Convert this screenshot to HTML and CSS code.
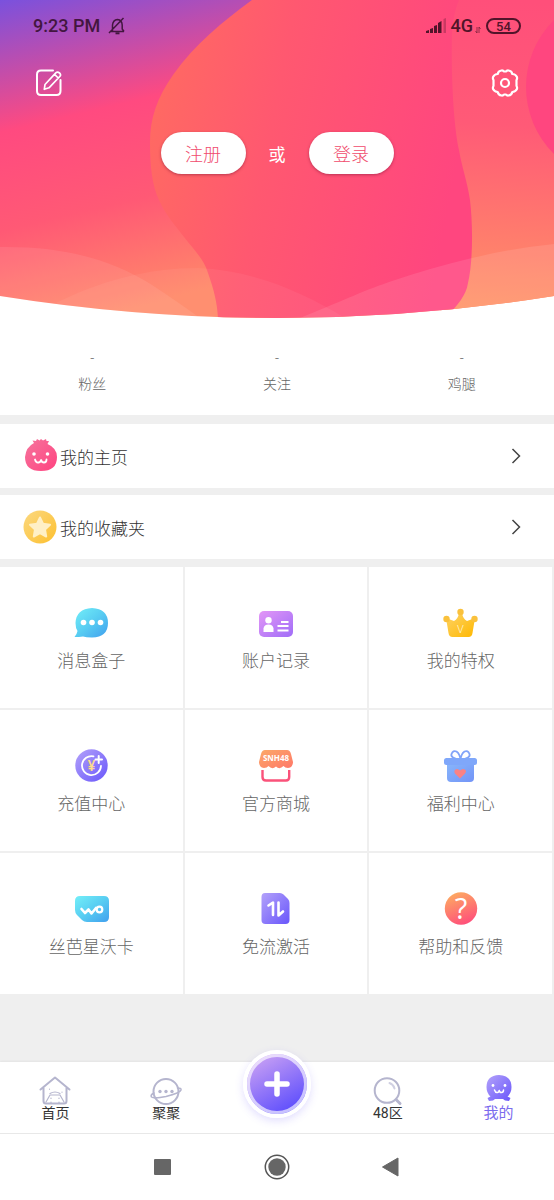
FILE: index.html
```html
<!DOCTYPE html>
<html lang="zh-CN">
<head>
    <meta charset="UTF-8">
    <meta name="viewport" content="width=device-width, initial-scale=1.0">
    <title>我的</title>
    <link rel="stylesheet" href="styles.css">
</head>
<body>
    <header class="hero">
        <svg class="hero-art" viewBox="0 0 554 318" preserveAspectRatio="none" aria-hidden="true">
            <defs>
                <linearGradient id="sky" gradientUnits="userSpaceOnUse" x1="0" y1="0" x2="76" y2="322">
                    <stop offset="0" stop-color="#7a51dd"/>
                    <stop offset=".39" stop-color="#ff4a80"/>
                    <stop offset=".68" stop-color="#ff5975"/>
                    <stop offset="1" stop-color="#ff8a69"/>
                </linearGradient>
                <linearGradient id="blob" gradientUnits="userSpaceOnUse" x1="150" y1="90" x2="460" y2="150">
                    <stop offset="0" stop-color="#ff6a62"/>
                    <stop offset=".4" stop-color="#ff5870"/>
                    <stop offset="1" stop-color="#ff467f"/>
                </linearGradient>
                <linearGradient id="side" gradientUnits="userSpaceOnUse" x1="500" y1="0" x2="480" y2="310">
                    <stop offset="0" stop-color="#ff4f7a"/>
                    <stop offset=".4" stop-color="#ff5a77"/>
                    <stop offset="1" stop-color="#ff9366"/>
                </linearGradient>
                <clipPath id="arc"><path d="M0 0H554V296Q277 340 0 296Z"/></clipPath>
            </defs>
            <g clip-path="url(#arc)">
                <rect width="554" height="318" fill="url(#sky)"/>
                <path d="M440 0H554V318H440Z" fill="url(#side)"/>
                <circle cx="620" cy="87" r="94" fill="#ff467f"/>
                <path d="M252 0C222 22 195 44 173 75C157 98 150 118 150 143C150 166 152 185 159 200C166 216 176 226 184 237C196 252 204 260 208 273C214 290 217 302 218 318H446C458 304 466 296 468 283C473 262 473 225 470 200C467 180 462 168 459 150C453 122 451 70 452 33Q453 14 459 0Z" fill="url(#blob)"/>
                <g fill="#fff">
                    <path d="M0 247C70 246 115 262 152 285Q175 300 200 318H0Z" fill-opacity=".08"/>
                    <path d="M50 306C100 280 150 268 198 268C250 270 300 290 345 318H50Z" fill-opacity=".05"/>
                    <path d="M300 318C340 302 360 292 389 282Q430 268 472 258T554 244V318Z" fill-opacity=".1"/>
                </g>
            </g>
        </svg>

        <div class="status">
            <span class="time">9:23 PM</span>
            <svg class="bell" width="18" height="18" viewBox="0 0 18 18" fill="none" stroke="#43163f" stroke-width="1.5">
                <path d="M3 14.5H16M4.500 14V8Q5 3 9.500 2.500Q14 3 14.200 8V12L16 14.500M1 16L15.500 1"/>
                <path d="M7.500 16.300H11.500" stroke-width="2"/>
            </svg>
            <svg class="signal" width="20" height="15" viewBox="0 0 20 15" fill="#51142a">
                <path d="M0 13L3 12V15H0ZM4 11L7 10V15H4ZM8 8L11 7V15H8ZM12 5L15.500 3V15H12Z"/>
                <path d="M17.500 1L20 0V15H17.500Z" opacity=".3"/>
            </svg>
            <span class="net">4G</span>
            <svg class="updown" width="6" height="8" viewBox="0 0 6 8" fill="none" stroke="#51142a" stroke-opacity=".6">
                <path d="M2 1V7L.5 5M4 7V1L5.500 3"/>
            </svg>
            <span class="battery">54</span>
        </div>

        <div class="tools">
            <button class="tool" aria-label="编辑">
                <svg width="28" height="28" viewBox="0 0 28 28" fill="none" stroke="#fff" stroke-width="2" stroke-linecap="round" stroke-linejoin="round">
                    <path d="M18 1.500H6Q2 1.500 2 5.500V22Q2 26 6 26H21.500Q25.500 26 25.500 22V11"/>
                    <path d="M10 15.500L20.800 3.800Q22.500 2.200 24.500 4T24.800 7.500L14 18.800L9.300 20.300ZM19.500 5.300L23.300 9" stroke-width="1.700"/>
                </svg>
            </button>
            <button class="tool" aria-label="设置">
                <svg width="28" height="28" viewBox="0 0 28 28" fill="none" stroke="#fff" stroke-width="2.200" stroke-linejoin="round">
                    <path d="M10.500 1.500Q12.300 1.300 13 2.500H15Q15.700 1.300 17.500 1.500Q20.700 1.800 21.300 5Q24.500 5.200 25.800 7.700Q26.500 9.500 25.500 11V17Q26.500 18.500 25.800 20.300Q24.500 22.800 21.300 23Q20.700 26.200 17.500 26.500Q15.700 26.700 15 25.500H13Q12.300 26.700 10.500 26.500Q7.300 26.200 6.700 23Q3.500 22.800 2.200 20.300Q1.500 18.500 2.500 17V11Q1.500 9.500 2.200 7.700Q3.500 5.200 6.700 5Q7.300 1.800 10.500 1.500Z"/>
                    <circle cx="14" cy="14" r="4"/>
                </svg>
            </button>
        </div>

        <div class="auth">
            <button class="pill">注册</button>
            <span>或</span>
            <button class="pill">登录</button>
        </div>
    </header>

    <main>
        <section class="stats">
            <div class="stat"><span>-</span><span>粉丝</span></div>
            <div class="stat"><span>-</span><span>关注</span></div>
            <div class="stat"><span>-</span><span>鸡腿</span></div>
        </section>

        <a class="row" href="#">
            <svg class="row-icon" width="40" height="40" viewBox="0 0 40 40">
                <defs>
                    <linearGradient id="pink" x1="0" y1="0" x2="1" y2="1"><stop offset="0" stop-color="#f5759d"/><stop offset="1" stop-color="#ff4380"/></linearGradient>
                </defs>
                <path d="M14 7L12.500 4.500L16 5L17 3L19.500 4.500L21 3L23 4.500L26 3L26.500 5H29L27.500 8Q37 12 37 21Q37 35 21 35Q5 35 5 21Q6 11 14 7Z" fill="url(#pink)"/>
                <circle cx="14" cy="18" r="1.800" fill="#fff"/><circle cx="27.500" cy="18" r="1.800" fill="#fff"/>
                <path d="M15 23.500Q16 27 18.500 26.500T21 23.500Q21.500 26.500 24 26.500T26.500 23.500" fill="none" stroke="#fff" stroke-width="1.800" stroke-linecap="round"/>
            </svg>
            <span>我的主页</span>
            <svg class="arrow" width="10" height="16" viewBox="0 0 10 16"><path d="M1.500 1L8.500 8L1.500 15"/></svg>
        </a>
        <a class="row" href="#">
            <svg class="row-icon" width="40" height="40" viewBox="0 0 40 40">
                <defs>
                    <linearGradient id="gold" x1="0" y1="0" x2="1" y2="1"><stop offset="0" stop-color="#fbd880"/><stop offset="1" stop-color="#fdc02f"/></linearGradient>
                </defs>
                <circle cx="20" cy="20" r="16.500" fill="url(#gold)"/>
                <path d="M20 10.500L23 16.800L30 17.800L25 22.500L26.200 29.500L20 26.200L13.800 29.500L15 22.500L10 17.800L17 16.800Z" fill="#fff0c6" stroke="#fff0c6" stroke-width="2" stroke-linejoin="round"/>
            </svg>
            <span>我的收藏夹</span>
            <svg class="arrow" width="10" height="16" viewBox="0 0 10 16"><path d="M1.500 1L8.500 8L1.500 15"/></svg>
        </a>

        <section class="grid">
            <a class="cell" href="#">
                <svg width="40" height="40" viewBox="0 0 40 40">
                    <defs><linearGradient id="cyan" x1="0" y1="0" x2="1" y2="1"><stop offset="0" stop-color="#73eff8"/><stop offset=".5" stop-color="#58cdf2"/><stop offset="1" stop-color="#419fee"/></linearGradient></defs>
                    <path d="M21 5Q37 6 37 20T21 34.500Q15 34.500 12 33.500Q8 34 3.500 34Q6 31 6.500 28Q4.500 25 4.500 20Q5 6 21 5Z" fill="url(#cyan)"/>
                    <g fill="#fff"><circle cx="12.500" cy="19.500" r="2.800"/><circle cx="21" cy="19.500" r="2.800"/><circle cx="29.500" cy="19.500" r="2.800"/></g>
                </svg>
                <span>消息盒子</span>
            </a>
            <a class="cell" href="#">
                <svg width="40" height="40" viewBox="0 0 40 40">
                    <defs><linearGradient id="violet" x1="0" y1="0" x2="1" y2="1"><stop offset="0" stop-color="#e397f6"/><stop offset="1" stop-color="#a06df8"/></linearGradient></defs>
                    <rect x="3" y="8" width="34" height="26" rx="5" fill="url(#violet)"/>
                    <g fill="#fff"><circle cx="12.500" cy="17.300" r="3.200"/><path d="M7.500 29V25.500Q8 21.500 12.500 21.500T17.500 25.500V29Z"/></g>
                    <path d="M25 19H32.500M21.500 23H32.500M21.500 27.500H32.500" stroke="#fff" stroke-width="2"/>
                </svg>
                <span>账户记录</span>
            </a>
            <a class="cell" href="#">
                <svg width="40" height="40" viewBox="0 0 40 40">
                    <defs><linearGradient id="crown" x1="0" y1="0" x2="1" y2="1"><stop offset="0" stop-color="#fdd367"/><stop offset="1" stop-color="#ffb800"/></linearGradient></defs>
                    <path d="M5 15L13 18Q17 16 18 10H21Q22 16 26 18L34 15L31.500 30Q31 34 27.500 34H11.500Q8 34 7.500 30Z" fill="url(#crown)"/>
                    <g fill="#fac13c"><circle cx="5.500" cy="16" r="3.200"/><circle cx="19.500" cy="9" r="3.200"/><circle cx="33.500" cy="16" r="3.200"/></g>
                    <text class="crown-v" x="19.500" y="30" text-anchor="middle">V</text>
                </svg>
                <span>我的特权</span>
            </a>
            <a class="cell" href="#">
                <svg width="40" height="40" viewBox="0 0 40 40">
                    <defs><linearGradient id="purple" x1="0" y1="0" x2="1" y2="1"><stop offset="0" stop-color="#b3a2fa"/><stop offset="1" stop-color="#6956fb"/></linearGradient></defs>
                    <circle cx="20.500" cy="19.500" r="16.200" fill="url(#purple)"/>
                    <path d="M22.500 10.300A9.500 9.500 0 1 0 30 19.800" fill="none" stroke="#fff" stroke-width="1.800" stroke-linecap="round"/>
                    <path d="M24.500 13.500H31M27.700 10V17" stroke="#fff" stroke-width="2" stroke-linecap="round"/>
                    <text class="yen" x="20.500" y="25" text-anchor="middle">¥</text>
                </svg>
                <span>充值中心</span>
            </a>
            <a class="cell" href="#">
                <svg width="40" height="40" viewBox="0 0 40 40">
                    <defs><linearGradient id="shop" x1="0" y1="0" x2="1" y2="1"><stop offset="0" stop-color="#fba968"/><stop offset="1" stop-color="#ff7869"/></linearGradient></defs>
                    <path d="M6.500 24V31Q6.500 34.500 10 34.500H30Q33.200 34.500 33.200 31V24" fill="none" stroke="#fa527a" stroke-width="2.400"/>
                    <path d="M9 4H31Q34 4 35 8L37 16Q37 21.500 32 22Q29 22 27.500 20Q23.500 24 20 20.500Q16 24 12.500 20Q11 22 8 22Q3 21.500 3 16L5 8Q6 4 9 4Z" fill="url(#shop)"/>
                    <text class="sign" x="20" y="15" text-anchor="middle">SNH48</text>
                </svg>
                <span>官方商城</span>
            </a>
            <a class="cell" href="#">
                <svg width="40" height="40" viewBox="0 0 40 40">
                    <defs><linearGradient id="gift" x1="0" y1="0" x2="1" y2="1"><stop offset="0" stop-color="#88b6fb"/><stop offset="1" stop-color="#7394f7"/></linearGradient></defs>
                    <path d="M19.500 14Q9 12 10.500 8Q12 4 15.500 5.500Q19 8 19.500 14ZM19.500 14Q30 12 28.500 8Q27 4 23.500 5.500Q20 8 19.500 14Z" fill="none" stroke="#81a3f8" stroke-width="1.800"/>
                    <path d="M6 17H33V32Q33 36 29 36H10Q6 36 6 32Z" fill="url(#gift)"/>
                    <rect x="3" y="12" width="33" height="7" rx="2.500" fill="#7fa7fa"/>
                    <path d="M19 32.500L14 27.500Q12.500 25 14.500 23.500T19 24.500Q21.500 22 23.800 23.500T24 27.500Z" fill="#f98284"/>
                </svg>
                <span>福利中心</span>
            </a>
            <a class="cell" href="#">
                <svg width="40" height="40" viewBox="0 0 40 40">
                    <path d="M9 7H33Q38 7 38 12V28Q38 33 33 33H16Q13 33 11 31L6 26Q4 24 4 21V12Q4 7 9 7Z" fill="url(#cyan)"/>
                    <path d="M10.500 20L14 24L17.500 20.500L20.500 24.500L25 19" fill="none" stroke="#fff" stroke-width="2.600" stroke-linecap="round" stroke-linejoin="round"/>
                    <circle cx="28.500" cy="20.500" r="2.800" fill="none" stroke="#fff" stroke-width="2.200"/>
                </svg>
                <span>丝芭星沃卡</span>
            </a>
            <a class="cell" href="#">
                <svg width="40" height="40" viewBox="0 0 40 40">
                    <path d="M9 4H24Q26 4 27.500 5.500L32 10Q33.500 11.500 33.500 14V31Q33.500 35 29.500 35H9.500Q5.500 35 5.500 31V8Q5.500 4 9 4Z" fill="url(#purple)"/>
                    <path d="M12.500 16.500L17 13.500V26M22.500 13.500V26.500L27 22.500" fill="none" stroke="#fff" stroke-width="2.600" stroke-linecap="round" stroke-linejoin="round"/>
                </svg>
                <span>免流激活</span>
            </a>
            <a class="cell" href="#">
                <svg width="40" height="40" viewBox="0 0 40 40">
                    <defs><linearGradient id="help" x1=".3" y1="0" x2=".7" y2="1"><stop offset="0" stop-color="#fdaa62"/><stop offset="1" stop-color="#ff4c7b"/></linearGradient></defs>
                    <circle cx="20" cy="19.500" r="16.200" fill="url(#help)"/>
                    <text class="question" x="20" y="30" text-anchor="middle">?</text>
                </svg>
                <span>帮助和反馈</span>
            </a>
        </section>
    </main>

    <nav class="tabs">
        <a class="tab" href="#">
            <svg width="34" height="32" viewBox="0 0 34 32" fill="none" stroke="#b5b5ce" stroke-width="2" stroke-linejoin="round" stroke-linecap="round">
                <path d="M2.500 15.500L17 3.500L31.500 15.500M5.500 14V27Q5.500 29.500 8 29.500H26Q28.500 29.500 28.500 27V14"/>
                <path d="M8 28L12 21H22L26 28M12 19.500Q17 16.500 22 19.500M11.500 15V15.200M24 18V18.200M13 24V24.500M21 24V24.500M13 28V28.500M21 28V28.500" stroke-width="1.200"/>
            </svg>
            <span>首页</span>
        </a>
        <a class="tab" href="#">
            <svg width="34" height="32" viewBox="0 0 34 32" fill="none" stroke="#b5b5ce" stroke-width="2" stroke-linecap="round">
                <circle cx="17" cy="17.500" r="12.500"/>
                <path d="M5 19Q1 21 2.500 23Q5 25 17 22.500Q31 19 32 16Q32.500 14 28.500 14" stroke-width="1.600"/>
                <g fill="#b5b5ce" stroke="none"><circle cx="11" cy="17.500" r="1.700"/><circle cx="17" cy="17.500" r="1.700"/><circle cx="23" cy="17.500" r="1.700"/></g>
            </svg>
            <span>聚聚</span>
        </a>
        <button class="publish" aria-label="发布">
            <svg width="28" height="28" viewBox="0 0 28 28"><path d="M14 4V24M4 14H24" stroke="#fff" stroke-width="5.500" stroke-linecap="round"/></svg>
        </button>
        <a class="tab" href="#">
            <svg width="34" height="32" viewBox="0 0 34 32" fill="none" stroke="#b5b5ce" stroke-width="2" stroke-linecap="round">
                <circle cx="16" cy="16.500" r="12.300"/>
                <path d="M25.500 26L29 29.500" stroke-width="3"/>
                <path d="M18.500 9Q22.500 10.500 23.500 14.500" stroke="#d0d0e2"/>
            </svg>
            <span>48区</span>
        </a>
        <a class="tab active" href="#">
            <svg width="34" height="32" viewBox="0 0 34 32">
                <path d="M17 1Q29.500 1.500 29.500 13Q29.500 19 25.500 22.500L28.500 24L27 27L23 26.500L21 25H13L11 26.500L7 27L5.500 24L8.500 22.500Q4.500 19 4.500 13Q4.500 1.500 17 1Z" fill="url(#purple)"/>
                <circle cx="11" cy="11.500" r="1.400" fill="#fff"/><circle cx="23" cy="11.500" r="1.400" fill="#fff"/>
                <path d="M12.500 16Q13.500 19 15.500 18.500T17 16Q17.500 18.500 19.500 18.500T21.500 16" fill="none" stroke="#fff" stroke-width="1.500" stroke-linecap="round"/>
            </svg>
            <span>我的</span>
        </a>
    </nav>

    <footer class="system">
        <button aria-label="最近任务"><svg width="26" height="26" viewBox="0 0 26 26"><rect x="4" y="5" width="17" height="16" rx="1" fill="#666"/></svg></button>
        <button aria-label="主屏幕"><svg width="26" height="26" viewBox="0 0 26 26"><circle cx="13" cy="13" r="11.700" fill="none" stroke="#555" stroke-width="1.500"/><circle cx="13" cy="13" r="8.700" fill="#666"/></svg></button>
        <button aria-label="返回"><svg width="26" height="26" viewBox="0 0 26 26"><path d="M4.500 13L20 4V22Z" fill="#666" stroke="#666" stroke-linejoin="round"/></svg></button>
    </footer>
</body>
</html>
```
FILE: styles.css
```css
:root {
    --purple: #7b6bee;
    --gray-bg: #efefef;
    --text: #333;
    --text-light: #666;
}

* {
    box-sizing: border-box;
}

body {
    margin: 0;
    min-height: 100vh;
    display: flex;
    flex-direction: column;
    background: var(--gray-bg);
    color: var(--text);
    font-family: Roboto, "Noto Sans CJK SC", sans-serif;
    font-weight: 300;
}

a {
    color: inherit;
    text-decoration: none;
}

button {
    border: 0;
    padding: 0;
    background: none;
    font: inherit;
}

svg {
    display: block;
    flex-shrink: 0;
}

.hero {
    position: relative;
    height: 318px;
    background: white;
}

.hero-art {
    position: absolute;
    width: 100%;
    height: 100%;
}

.status,
.tools,
.auth {
    position: relative;
    display: flex;
    align-items: center;
}

.status {
    height: 51px;
    padding: 0 33px;
    color: #43163f;
    font-size: 18px;
    font-weight: 500;
}

.bell {
    margin-left: 8px;
}

.signal {
    margin-left: auto;
}

.net {
    margin-left: 5px;
    color: #51142a;
}

.updown {
    margin: 8px 5px 0 2px;
}

.battery {
    width: 35px;
    height: 16px;
    border: 2px solid #51142a;
    border-radius: 8px;
    color: #51142a;
    font-size: 13px;
    line-height: 13px;
    text-align: center;
}

.tools {
    justify-content: space-between;
    height: 63px;
    padding: 0 35px;
}

.auth {
    justify-content: center;
    gap: 23px;
    margin-top: 18px;
    color: white;
    font-size: 17px;
    font-weight: 400;
}

.pill {
    width: 85px;
    height: 42px;
    border-radius: 21px;
    background: white;
    color: #f04b6c;
    font-size: 18px;
    font-weight: 300;
    box-shadow: 0 1px 3px rgba(120,20,50,0.5);
}

.stats {
    display: grid;
    grid-template-columns: repeat(3, 1fr);
    padding: 27px 0 18px;
    background: white;
}

.stat {
    display: flex;
    flex-direction: column;
    align-items: center;
    color: var(--text-light);
    font-size: 14px;
    line-height: 26px;
}

.row {
    display: flex;
    align-items: center;
    height: 64px;
    margin-top: 7px;
    padding: 0 33px 0 20px;
    background: white;
    font-size: 17px;
}

.stats + .row {
    margin-top: 9px;
}

.arrow {
    margin-left: auto;
    fill: none;
    stroke: #444;
    stroke-width: 1.5;
}

.grid {
    display: grid;
    grid-template-columns: repeat(3, 1fr);
    gap: 2px;
    margin-top: 8px;
    padding-right: 2px;
}

.cell {
    display: flex;
    flex-direction: column;
    align-items: center;
    gap: 6px;
    height: 141px;
    padding-top: 36px;
    background: white;
    color: var(--text-light);
    font-size: 17px;
    line-height: 24px;
}

.crown-v {
    fill: #fff5d3;
    font-size: 11px;
}

.yen {
    fill: #fbdc8c;
    font-size: 14px;
    font-weight: 500;
}

.sign {
    fill: white;
    font-family: "Open Sans", sans-serif;
    font-size: 8px;
    font-weight: 700;
}

.question {
    fill: white;
    font-family: "Open Sans", sans-serif;
    font-size: 29px;
    font-weight: 500;
}

.tabs {
    display: grid;
    grid-template-columns: repeat(5, 1fr);
    height: 71px;
    margin-top: auto;
    background: white;
    box-shadow: 0 -1px 2px rgba(0,0,0,0.05);
}

.tab {
    display: flex;
    flex-direction: column;
    align-items: center;
    padding-top: 12px;
    font-size: 14px;
    font-weight: 400;
    line-height: 15px;
}

.active {
    color: var(--purple);
    font-size: 15px;
}

.publish {
    display: grid;
    place-items: center;
    justify-self: center;
    width: 68px;
    height: 68px;
    margin-top: -12px;
    border: 4px solid white;
    border-radius: 50%;
    background: linear-gradient(150deg, #c8a0f4 10%, #5a4bfd 90%);
    box-shadow: inset 0 0 0 3px rgba(255,255,255,0.65), 0 3px 8px rgba(110,90,250,0.2);
}

.system {
    display: flex;
    justify-content: center;
    align-items: center;
    gap: 88px;
    height: 67px;
    border-top: 1px solid #e8e8e8;
    background: white;
}
```
